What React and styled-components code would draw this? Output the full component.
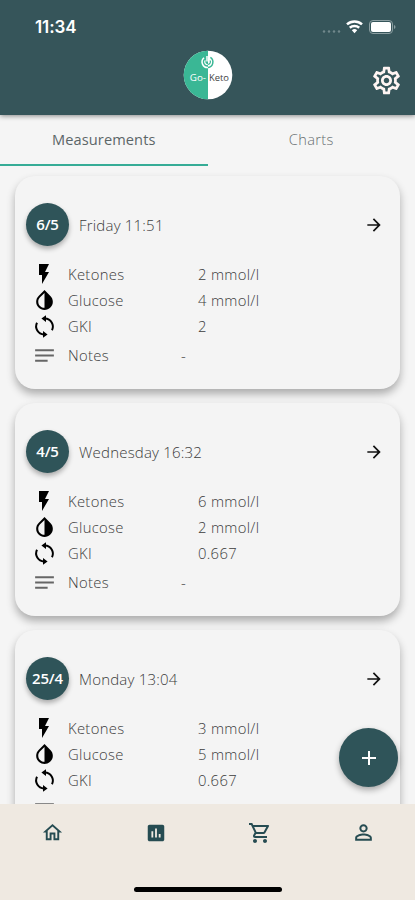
import React from 'react';
import styled, { createGlobalStyle } from 'styled-components';
import {
  MdArrowForward,
  MdAssessment,
  MdFlashOn,
  MdInvertColors,
  MdNotes,
  MdOutlineHome,
  MdOutlineSettings,
  MdOutlineShoppingCart,
  MdAdd,
  MdPersonOutline
} from 'react-icons/md';

const GlobalStyle = createGlobalStyle`
  * {
    box-sizing: border-box;
  }

  body {
    margin: 0;
    font-family: 'Open Sans', 'Noto Sans', sans-serif;
    background: #f5f5f5;
  }

  svg {
    display: block;
    flex: none;
  }
`

const Screen = styled.div`
  width: 415px;
  height: 900px;
  display: flex;
  flex-direction: column;
  overflow: hidden;
  background: #f5f5f5;
`

const Header = styled.header`
  height: 115px;
  flex: none;
  background: #36555a;
  box-shadow: 0 1px 5px rgba(0, 0, 0, .45);
  z-index: 2;
`

const StatusBar = styled.div`
  height: 50px;
  padding: 4px 18px 0 35px;
  display: flex;
  align-items: center;
  justify-content: space-between;
  color: #fff;
  font: 600 17px Inter, sans-serif;
  letter-spacing: -.1px;
`

const TitleBar = styled.div`
  display: grid;
  grid-template-columns: 1fr 50px 1fr;
  align-items: center;
  padding-right: 12px;
  padding-left: 13px;

  .settings {
    justify-self: end;
    margin-top: 10px;
    color: #fff5f3;
  }
`

const Tabs = styled.nav`
  display: flex;
  height: 51px;
  flex: none;
`

const Tab = styled.div`
  flex: 1;
  display: flex;
  align-items: center;
  justify-content: center;
  padding-bottom: 1px;
  font-size: 14.6px;
  font-weight: ${({ $active }) => $active ? 400 : 300};
  letter-spacing: ${({ $active }) => $active ? '.1px' : '.35px'};
  color: ${({ $active }) => $active ? '#5c6668' : '#666e70'};
  border-bottom: 2px solid ${({ $active }) => $active ? '#36ac96' : 'transparent'};
`

const List = styled.main`
  flex: 1;
  min-height: 0;
  overflow: hidden;
  padding: 10px 15px 0;
  display: flex;
  flex-direction: column;
  gap: 14px;
`

const Card = styled.section`
  height: 213px;
  flex: none;
  padding: 27px 15px 0 11px;
  border-radius: 20px;
  background: #f4f4f4;
  box-shadow: 0 5px 9px rgba(0, 0, 0, .3);
`

const CardHeader = styled.div`
  display: flex;
  align-items: center;
  height: 43px;
  color: #3c3c3c;
  font-size: 15px;
  font-weight: 300;
  letter-spacing: .2px;

  .arrow {
    margin-left: auto;
    margin-right: 1px;
    color: #111;
  }
`

const DateBadge = styled.div`
  width: 43px;
  height: 43px;
  margin-right: 10px;
  border-radius: 50%;
  display: flex;
  align-items: center;
  justify-content: center;
  background: #2f5459;
  color: #fff;
  font-size: 15px;
  font-weight: 600;
  letter-spacing: -.2px;
  padding-bottom: 1px;
  box-shadow: 0 3px 5px rgba(0, 0, 0, .3);
`

const Rows = styled.div`
  padding: 14.5px 0 0 5.5px;
`

const Row = styled.div`
  display: grid;
  grid-template-columns: 36.5px ${({ $notes }) => $notes ? '113px' : '130px'} 1fr;
  align-items: center;
  height: ${({ $notes }) => $notes ? '31px' : '26.4px'};
  font-size: 14.8px;
  font-weight: 300;
  letter-spacing: .32px;
  color: #3c3c3c;

  svg {
    color: ${({ $notes }) => $notes ? '#666' : '#000'};
  }
`

const BottomBar = styled.footer`
  height: 96px;
  flex: none;
  display: flex;
  flex-direction: column;
  justify-content: space-between;
  align-items: center;
  padding-bottom: 8px;
  background: #efe9e1;
  z-index: 1;
`

const NavItems = styled.div`
  width: 100%;
  height: 57px;
  padding-left: 1px;
  display: grid;
  grid-template-columns: repeat(4, 1fr);
  align-items: center;
  justify-items: center;
  color: #264c52;
`

const HomeIndicator = styled.div`
  width: 148px;
  height: 5px;
  border-radius: 3px;
  background: #000;
`

const AddButton = styled.button`
  position: absolute;
  left: 339px;
  top: 728px;
  width: 59px;
  height: 59px;
  padding: 0;
  border: 0;
  border-radius: 50%;
  display: flex;
  align-items: center;
  justify-content: center;
  background: #2f5459;
  color: #fff;
  box-shadow: 0 3px 6px rgba(0, 0, 0, .32);
`

const measurements = [
  { date: '6/5', time: 'Friday 11:51', ketones: '2 mmol/l', glucose: '4 mmol/l', gki: '2' },
  { date: '4/5', time: 'Wednesday 16:32', ketones: '6 mmol/l', glucose: '2 mmol/l', gki: '0.667' },
  { date: '25/4', time: 'Monday 13:04', ketones: '3 mmol/l', glucose: '5 mmol/l', gki: '0.667' }
];

const Logo = () => (
  <svg width="50" height="50" viewBox="0 0 50 50">
    <circle cx="25" cy="25" r="24.3" fill="#fff" />
    <path d="M25 .7a24.3 24.3 0 0 0 0 48.6z" fill="#3ab795" />
    <path d="M21 7.8a5.6 5.6 0 0 0 4 9.8" fill="none" stroke="#fff" strokeWidth="1.5" />
    <path d="M25 17.6a5.6 5.6 0 0 0 2.4-10.2" fill="none" stroke="#3ab795" strokeWidth="1.5" />
    <path d="M24 6v5.5" stroke="#fff" strokeWidth="1.5" />
    <path d="M22.3 10.3a2.6 2.6 0 0 0 2.4 4.2" fill="none" stroke="#fff" strokeWidth="1.2" />
    <path d="M25 14.5a2.6 2.6 0 0 0 2-4" fill="none" stroke="#3ab795" strokeWidth="1.2" />
    <text x="6.8" y="31" fill="#fff" fontSize="9.8" fontFamily="Open Sans">Go-</text>
    <text x="26" y="31" fill="#444" fontSize="9.4" fontFamily="Open Sans">Keto</text>
  </svg>
)

const Status = () => (
  <svg width="76" height="18" viewBox="0 0 76 18">
    <g fill="#71888c">
      <circle cx="3" cy="13.5" r="1.2" />
      <circle cx="8" cy="13.5" r="1.2" />
      <circle cx="13" cy="13.5" r="1.2" />
      <circle cx="18" cy="13.5" r="1.2" />
    </g>
    <g fill="none" stroke="#fff" strokeWidth="2.5">
      <path d="M26 6.4a11 11 0 0 1 15 0" />
      <path d="M28.8 9.8a7 7 0 0 1 9.4 0" />
    </g>
    <path d="M30.8 12.3a4 4 0 0 1 5.4 0l-2.7 3z" fill="#fff" />
    <rect x="48.5" y="2.5" width="23" height="13" rx="3.5" fill="none" stroke="#8b9ea1" />
    <rect x="50" y="4" width="20" height="10" rx="2" fill="#fff" />
    <path d="M73 7v4q1.5-.7 1.5-2t-1.5-2z" fill="#8b9ea1" />
  </svg>
)

const CycleIcon = () => (
  <svg width="25" height="25" viewBox="0 0 25 25">
    <path
      d="M13 4.6a8 8 0 0 1 7 11.6M12 20.4A8 8 0 0 1 5 8.8"
      fill="none"
      stroke="currentColor"
      strokeWidth="2"
    />
    <path d="M14 1.2v6.8l-4.6-3.4zM11 23.8v-6.8l4.6 3.4z" fill="currentColor" />
  </svg>
)

const Measurement = ({ item }) => (
  <Card>
    <CardHeader>
      <DateBadge>{ item.date }</DateBadge>
      { item.time }
      <MdArrowForward className="arrow" size={ 20 } />
    </CardHeader>
    <Rows>
      <Row><MdFlashOn size={ 24 } /><span>Ketones</span><span>{ item.ketones }</span></Row>
      <Row><MdInvertColors size={ 25 } /><span>Glucose</span><span>{ item.glucose }</span></Row>
      <Row><CycleIcon /><span>GKI</span><span>{ item.gki }</span></Row>
      <Row $notes><MdNotes size={ 25 } /><span>Notes</span><span>-</span></Row>
    </Rows>
  </Card>
)

export default () => {
  return <>
    <GlobalStyle />
    <Screen>
      <Header>
        <StatusBar>
          <span>11:34</span>
          <Status />
        </StatusBar>
        <TitleBar>
          <span />
          <Logo />
          <MdOutlineSettings className="settings" size={ 33 } />
        </TitleBar>
      </Header>
      <Tabs>
        <Tab $active>Measurements</Tab>
        <Tab>Charts</Tab>
      </Tabs>
      <List>
        { measurements.map((item) => <Measurement key={ item.date } item={ item } />) }
      </List>
      <BottomBar>
        <NavItems>
          <MdOutlineHome size={ 23 } />
          <MdAssessment size={ 22 } />
          <MdOutlineShoppingCart size={ 24 } />
          <MdPersonOutline size={ 25 } />
        </NavItems>
        <HomeIndicator />
      </BottomBar>
      <AddButton><MdAdd size={ 24 } /></AddButton>
    </Screen>
  </>
}
